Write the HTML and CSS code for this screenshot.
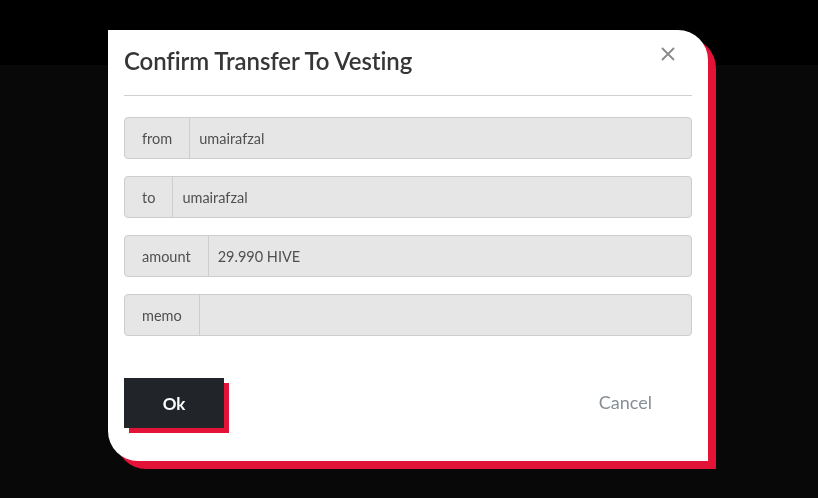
FILE: index.html
```html
<!DOCTYPE html>
<html lang="en">
<head>
    <meta charset="UTF-8">
    <meta name="viewport" content="width=device-width, initial-scale=1.0">
    <title>Confirm Transfer To Vesting</title>
    <link rel="stylesheet" href="styles.css">
</head>
<body>
    <!-- Page behind the modal (dimmed) -->
    <div class="page">
        <div class="topbar"></div>
    </div>

    <!-- Modal -->
    <div class="backdrop">
        <div class="modal">
            <div class="modal-header">
                <h4 class="modal-title">Confirm Transfer To Vesting</h4>
                <button class="close" aria-label="Close">
                    <svg width="14" height="14" viewBox="0 0 14 14">
                        <path d="M1 1 L13 13 M13 1 L1 13" stroke="#8a8a8a" stroke-width="1.8" fill="none"/>
                    </svg>
                </button>
            </div>

            <div class="modal-body">
                <div class="input-group">
                    <span class="addon">from</span>
                    <span class="value">umairafzal</span>
                </div>
                <div class="input-group">
                    <span class="addon">to</span>
                    <span class="value">umairafzal</span>
                </div>
                <div class="input-group">
                    <span class="addon">amount</span>
                    <span class="value">29.990 HIVE</span>
                </div>
                <div class="input-group">
                    <span class="addon">memo</span>
                    <span class="value"></span>
                </div>
            </div>

            <div class="modal-footer">
                <button class="btn-ok">Ok</button>
                <button class="btn-cancel">Cancel</button>
            </div>
        </div>
    </div>
</body>
</html>
```

FILE: styles.css
```css
body {
    margin: 0;
    padding: 0;
    font-family: Lato, "Open Sans", sans-serif;
    background-color: #080808;
    width: 818px;
    height: 498px;
    overflow: hidden;
}
.page {
    height: 100%;
}
.topbar {
    height: 65px;
    background-color: #000;
}
.backdrop {
    position: fixed;
    top: 0;
    left: 0;
    right: 0;
    bottom: 0;
    display: flex;
    justify-content: center;
    align-items: flex-start;
    padding: 30px 2px 0 0;
}
.modal {
    width: 600px;
    background-color: #fff;
    border-radius: 0 30px 0 30px;
    box-shadow: 8px 8px 0 #e31337;
}
.modal-header {
    display: flex;
    justify-content: space-between;
    align-items: flex-start;
    margin: 0 16px;
    padding: 15px 0 0 0;
    height: 50px;
    border-bottom: 1px solid #cfcfcf;
}
.modal-title {
    margin: 0;
    font-size: 24px;
    font-weight: 600;
    color: #363636;
    line-height: 32px;
    letter-spacing: -0.1px;
}
.close {
    background: none;
    border: none;
    padding: 0;
    margin: 2px 17px 0 0;
    cursor: pointer;
    display: flex;
}
.modal-body {
    padding: 21px 16px 0 16px;
}
.input-group {
    display: flex;
    height: 40px;
    margin-bottom: 17px;
    background-color: #e6e6e6;
    border: 1px solid #cdcdcd;
    border-radius: 4px;
    font-size: 14.5px;
    color: #505050;
}
.addon {
    display: flex;
    align-items: center;
    padding: 0 17px;
    border-right: 1px solid #cdcdcd;
}
.value {
    display: flex;
    align-items: center;
    padding: 0 9px;
    flex: 1;
}
.modal-footer {
    display: flex;
    justify-content: space-between;
    align-items: center;
    padding: 25px 16px 33px 16px;
}
.btn-ok {
    width: 100px;
    height: 50px;
    background-color: #212429;
    color: #fff;
    border: none;
    font-family: inherit;
    font-size: 17px;
    font-weight: bold;
    box-shadow: 5px 5px 0 #e31337;
    cursor: pointer;
}
.btn-cancel {
    background: none;
    border: none;
    font-family: inherit;
    font-size: 18px;
    color: #868e96;
    padding: 0 40px 2px 0;
    cursor: pointer;
}
```
